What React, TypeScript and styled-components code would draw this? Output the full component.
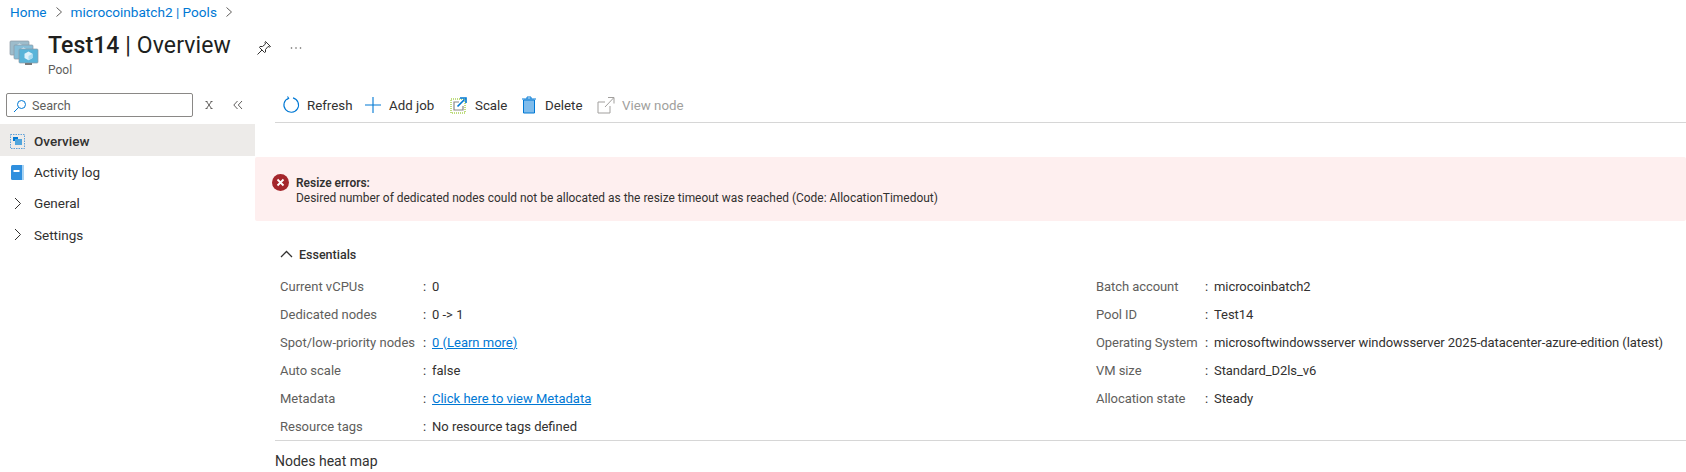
import React from "react";
import styled, { createGlobalStyle } from "styled-components";

const Global = createGlobalStyle`
  html, body { margin: 0; padding: 0; background: #fff; }
  body { font-family: "Roboto", "Liberation Sans", sans-serif; font-size: 13px; color: #323130; width: 1686px; height: 472px; overflow: hidden; }
`;

const Page = styled.div`
  width: 1686px;
  height: 472px;
  display: flex;
  flex-direction: column;
  overflow: hidden;
`;
const Crumbs = styled.nav`
  height: 21px;
  padding-top: 2px;
  box-sizing: border-box;
  display: flex;
  align-items: center;
  gap: 8px;
  padding-left: 10px;
  color: #0078d4;
  font-size: 13.6px;
`;
const Header = styled.header`
  height: 64px;
  display: flex;
  padding-left: 9px;
`;
const TitleIcon = styled.svg`
  width: 30px;
  height: 30px;
  margin-top: 18px;
  flex: none;
`;
const TitleBlock = styled.div`
  margin-left: 9px;
  padding-top: 10px;
  width: 186px;
`;
const Title = styled.h1`
  margin: 0;
  font-size: 23px;
  letter-spacing: 0.1px;
  line-height: 30px;
  font-weight: 400;
  color: #201f1e;
  white-space: nowrap;
  b { font-weight: 500; }
`;
const Sub = styled.div`
  font-size: 12px;
  line-height: 16px;
  color: #605e5c;
  margin-top: 1px;
`;
const HeaderTools = styled.div`
  display: flex;
  align-items: center;
  gap: 18px;
  height: 30px;
  margin-top: 12px;
  padding-left: 22px;
  color: #605e5c;
`;
const Body = styled.div`
  flex: 1;
  display: flex;
  min-height: 0;
`;
const Side = styled.aside`
  width: 255px;
  flex: none;
  padding-top: 8px;
`;
const SearchRow = styled.div`
  display: flex;
  align-items: center;
  padding-left: 6px;
  height: 24px;
`;
const SearchBox = styled.div`
  width: 187px;
  height: 24px;
  box-sizing: border-box;
  border: 1px solid #8a8886;
  border-radius: 2px;
  display: flex;
  align-items: center;
  gap: 5px;
  padding: 1px 0 0 6px;
  color: #605e5c;
  font-size: 12.6px;
`;
const SearchTools = styled.div`
  display: flex;
  align-items: center;
  gap: 19px;
  margin-left: 11px;
`;
const NavItem = styled.div<{ $active?: boolean; $h: number }>`
  height: ${(p) => p.$h}px;
  box-sizing: border-box;
  padding-top: ${(p) => (p.$active ? 2 : 0)}px;
  display: flex;
  align-items: center;
  padding-left: 10px;
  gap: 9px;
  font-size: 13.5px;
  color: #323130;
  background: ${(p) => (p.$active ? "#edebe9" : "transparent")};
  font-weight: ${(p) => (p.$active ? 500 : 400)};
  svg { flex: none; width: 15px; height: 15px; }
`;
const NavList = styled.div`
  margin-top: 7px;
`;
const Main = styled.main`
  flex: 1;
  min-width: 0;
  display: flex;
  flex-direction: column;
`;
const Toolbar = styled.div`
  margin-left: 20px;
  height: 34px;
  padding: 3px 0 0 7px;
  display: flex;
  align-items: center;
  border-bottom: 1px solid #d6d6d6;
`;
const ToolBtn = styled.div<{ $off?: boolean; $w: number }>`
  width: ${(p) => p.$w}px;
  display: flex;
  align-items: center;
  gap: 7px;
  font-size: 13.3px;
  color: ${(p) => (p.$off ? "#a19f9d" : "#323130")};
  svg { flex: none; width: 18px; height: 18px; }
`;
const Banner = styled.div`
  margin-top: 34px;
  height: 64px;
  background: #feefef;
  display: flex;
  align-items: center;
  padding-left: 17px;
  gap: 7px;
  border-radius: 2px;
  color: #323130;
  font-size: 11.95px;
  line-height: 15px;
  b { font-weight: 600; display: block; }
  svg { width: 17px; height: 17px; flex: none; margin-top: -13px; }
`;
const BannerText = styled.div`
  padding-top: 4px;
`;
const EssHead = styled.div`
  height: 34px;
  margin-top: 16px;
  padding-left: 25px;
  display: flex;
  align-items: center;
  gap: 6px;
  font-size: 12.5px;
  font-weight: 500;
  color: #323130;
`;
const Grid = styled.div`
  margin-left: 20px;
  padding-left: 5px;
  padding-top: 1px;
  display: grid;
  grid-template-columns: 816px 1fr;
  height: 170px;
  box-sizing: border-box;
  border-bottom: 1px solid #d6d6d6;
`;
const Col = styled.div<{ $label: number; $track?: string }>`
  display: grid;
  grid-template-columns: ${(p) => p.$label}px 1fr;
  grid-auto-rows: 28px;
  align-items: center;
  font-size: 13px;
  letter-spacing: ${(p) => p.$track ?? "0"};
`;
const Label = styled.div`
  color: #605e5c;
  white-space: nowrap;
`;
const Value = styled.div`
  color: #323130;
  white-space: nowrap;
  &::before {
    content: ":";
    display: inline-block;
    width: 9px;
  }
`;
const Link = styled.a`
  color: #0078d4;
  text-decoration: underline;
`;
const Heat = styled.div`
  padding: 12px 0 0 20px;
  font-size: 14px;
  color: #323130;
`;

const Chev = () => (
  <svg width="8" height="12" viewBox="0 0 8 12" fill="none" stroke="#605e5c" strokeWidth="1">
    <path d="M1.5 1.5 6.5 6 1.5 10.5" />
  </svg>
);
const NavChev = () => (
  <svg viewBox="0 0 15 15" fill="none" stroke="#323130" strokeWidth="1">
    <path d="M5 2 10.5 7.5 5 13" />
  </svg>
);

const Monitor = ({ x, y, f }: { x: number; y: number; f: string }) => (
  <g transform={`translate(${x} ${y})`}>
    <rect width="19" height="14" rx="1" fill={f} stroke="#8d9aa3" strokeWidth=".7" />
    <path d="M9.5 2.500 13.500 4.700v4.300l-4 2.300-4-2.300V4.700z" fill="#dff2fb" />
    <path d="M9.500 7v4.300l4-2.300V4.700z" fill="#a9dcf2" />
    <rect x="6" y="14" width="7" height="2" fill="#7a7a7a" />
  </g>
);

const columnsL: [string, React.ReactNode][] = [
  ["Current vCPUs", "0"],
  ["Dedicated nodes", "0 -> 1"],
  ["Spot/low-priority nodes", <Link key="a">0 (Learn more)</Link>],
  ["Auto scale", "false"],
  ["Metadata", <Link key="b">Click here to view Metadata</Link>],
  ["Resource tags", "No resource tags defined"],
];
const columnsR: [string, React.ReactNode][] = [
  ["Batch account", "microcoinbatch2"],
  ["Pool ID", "Test14"],
  ["Operating System", "microsoftwindowsserver windowsserver 2025-datacenter-azure-edition (latest)"],
  ["VM size", "Standard_D2ls_v6"],
  ["Allocation state", "Steady"],
];

export default function App() {
  return (
    <Page>
      <Global />
      <Crumbs>
        <span>Home</span>
        <Chev />
        <span>microcoinbatch2 | Pools</span>
        <Chev />
      </Crumbs>
      <Header>
        <TitleIcon viewBox="0 0 30 30">
          <Monitor x={1} y={2} f="#9dbccb" />
          <Monitor x={5} y={6} f="#86bed8" />
          <Monitor x={10} y={10} f="#59b4d9" />
        </TitleIcon>
        <TitleBlock>
          <Title>
            <b>Test14</b> | Overview
          </Title>
          <Sub>Pool</Sub>
        </TitleBlock>
        <HeaderTools>
          <svg width="16" height="16" viewBox="0 0 16 16" fill="none" stroke="#323130" strokeWidth="1">
            <path d="M9.500 1.500 14.500 6.500 13.500 7 12 6.500 9.500 9.500 9.500 12 8.500 12.500 3.500 7.500 4 6.500 6.500 6.500 9.500 4 9 2.500z M6 10 1.500 14.500" />
          </svg>
          <svg width="12" height="4" viewBox="0 0 12 4" fill="#605e5c">
            <circle cx="1.500" cy="2" r=".8" />
            <circle cx="6" cy="2" r=".8" />
            <circle cx="10.500" cy="2" r=".8" />
          </svg>
        </HeaderTools>
      </Header>
      <Body>
        <Side>
          <SearchRow>
            <SearchBox>
              <svg width="14" height="14" viewBox="0 0 14 14" fill="none" stroke="#0078d4" strokeWidth="1">
                <circle cx="8.500" cy="5.500" r="4" />
                <path d="M5.500 8.500 1 13" />
              </svg>
              Search
            </SearchBox>
            <SearchTools>
              <svg width="10" height="10" viewBox="0 0 10 10" fill="none" stroke="#605e5c" strokeWidth="1">
                <path d="M2.500 1.500l5 7M7.500 1.500l-5 7M1.500 1.500h2M6.500 1.500h2M1.500 8.500h2M6.500 8.500h2" />
              </svg>
              <svg width="10" height="10" viewBox="0 0 10 10" fill="none" stroke="#605e5c" strokeWidth="1">
                <path d="M4.500 1 .8 5l3.700 4M9 1 5.300 5 9 9" />
              </svg>
            </SearchTools>
          </SearchRow>
          <NavList>
            <NavItem $active $h={32}>
              <svg viewBox="0 0 15 15">
                <rect x=".5" y=".5" width="14" height="14" fill="none" stroke="#5ea0d8" strokeWidth="1" strokeDasharray="1.500 1" />
                <rect x="3" y="3" width="5" height="4" fill="#0078d4" />
                <rect x="5" y="5" width="7" height="6" fill="#50a5dc" />
              </svg>
              Overview
            </NavItem>
            <NavItem $h={32}>
              <svg viewBox="0 0 15 15">
                <rect x="1" y="0" width="13" height="15" rx="1.500" fill="#2f8fde" />
                <rect x="12" y="0" width="2" height="15" fill="#a9d3f2" />
                <rect x="3.500" y="5" width="6" height="2" fill="#fff" />
              </svg>
              Activity log
            </NavItem>
            <NavItem $h={30}>
              <NavChev />
              General
            </NavItem>
            <NavItem $h={33}>
              <NavChev />
              Settings
            </NavItem>
          </NavList>
        </Side>
        <Main>
          <Toolbar>
            <ToolBtn $w={82}>
              <svg viewBox="0 0 18 18" fill="none" stroke="#0078d4" strokeWidth="1.100">
                <path d="M6.500 2.200A7.300 7.300 0 1 0 11 1.900M5.500 .5l1.200 1.800-1.800 1.300" />
              </svg>
              Refresh
            </ToolBtn>
            <ToolBtn $w={86}>
              <svg viewBox="0 0 18 18" fill="none" stroke="#0078d4" strokeWidth="1.100">
                <path d="M9 1v16M1 9h16" />
              </svg>
              Add job
            </ToolBtn>
            <ToolBtn $w={70}>
              <svg viewBox="0 0 18 18" fill="none">
                <rect x="1" y="3" width="14" height="14" stroke="#7fba00" strokeWidth="1" strokeDasharray="1 1" />
                <path d="M9 6H4v8h9v-4" stroke="#8a8886" strokeWidth="1.200" />
                <path d="M7.500 10.500 14.500 3.500M10 2h6v5" stroke="#0078d4" strokeWidth="1.600" />
              </svg>
              Scale
            </ToolBtn>
            <ToolBtn $w={77}>
              <svg viewBox="0 0 18 18" fill="none">
                <path d="M3.500 4h11v13h-11z" fill="#7fbcec" stroke="#0078d4" strokeWidth="1" />
                <path d="M2 3h14M7 3V1h4v2" stroke="#0078d4" strokeWidth="1" />
              </svg>
              Delete
            </ToolBtn>
            <ToolBtn $w={100} $off>
              <svg viewBox="0 0 18 18" fill="none" stroke="#a19f9d" strokeWidth="1">
                <path d="M13 10v7H1V6h7M8 11 16.500 2M11 1.500h6v6" />
              </svg>
              View node
            </ToolBtn>
          </Toolbar>
          <Banner>
            <svg viewBox="0 0 17 17">
              <circle cx="8.500" cy="8.500" r="8.500" fill="#a4262c" />
              <path d="M5.500 5.500l6 6M11.500 5.500l-6 6" stroke="#fff" strokeWidth="1.800" />
            </svg>
            <BannerText>
              <b>Resize errors:</b>
              Desired number of dedicated nodes could not be allocated as the resize timeout was reached (Code: AllocationTimedout)
            </BannerText>
          </Banner>
          <EssHead>
            <svg width="13" height="8" viewBox="0 0 13 8" fill="none" stroke="#323130" strokeWidth="1.300">
              <path d="M1 7 6.500 1.500 12 7" />
            </svg>
            Essentials
          </EssHead>
          <Grid>
            <Col $label={143}>
              {columnsL.map(([l, v]) => (
                <React.Fragment key={l}>
                  <Label>{l}</Label>
                  <Value>{v}</Value>
                </React.Fragment>
              ))}
            </Col>
            <Col $label={109} $track="-0.07px">
              {columnsR.map(([l, v]) => (
                <React.Fragment key={l}>
                  <Label>{l}</Label>
                  <Value>{v}</Value>
                </React.Fragment>
              ))}
            </Col>
          </Grid>
          <Heat>Nodes heat map</Heat>
        </Main>
      </Body>
    </Page>
  );
}
